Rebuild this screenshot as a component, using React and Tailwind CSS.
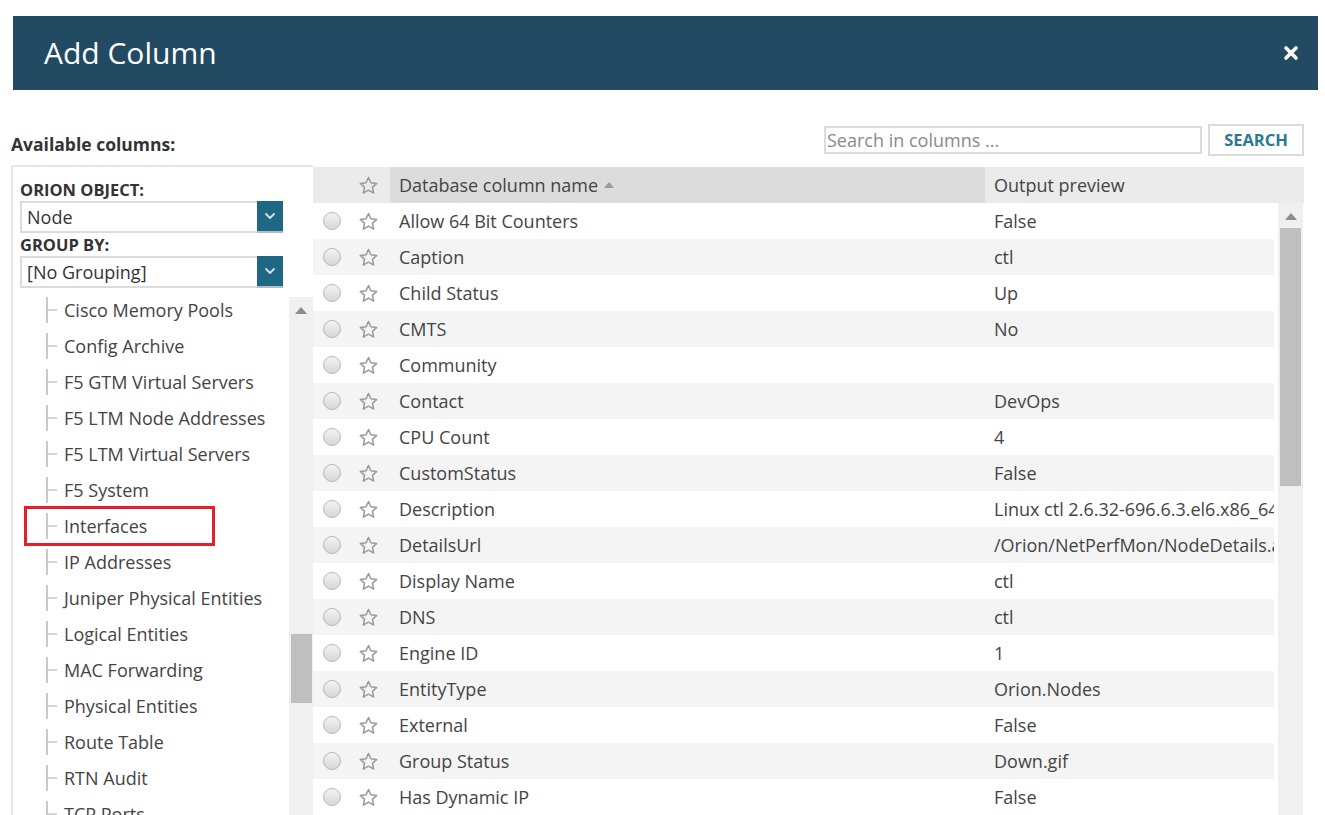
import React from "react";

const treeItems = [
  "Cisco Memory Pools",
  "Config Archive",
  "F5 GTM Virtual Servers",
  "F5 LTM Node Addresses",
  "F5 LTM Virtual Servers",
  "F5 System",
  "Interfaces",
  "IP Addresses",
  "Juniper Physical Entities",
  "Logical Entities",
  "MAC Forwarding",
  "Physical Entities",
  "Route Table",
  "RTN Audit",
  "TCP Ports",
];

const rows = [
  ["Allow 64 Bit Counters", "False"],
  ["Caption", "ctl"],
  ["Child Status", "Up"],
  ["CMTS", "No"],
  ["Community", ""],
  ["Contact", "DevOps"],
  ["CPU Count", "4"],
  ["CustomStatus", "False"],
  ["Description", "Linux ctl 2.6.32-696.6.3.el6.x86_64"],
  ["DetailsUrl", "/Orion/NetPerfMon/NodeDetails.aspx?NetObject=N:1"],
  ["Display Name", "ctl"],
  ["DNS", "ctl"],
  ["Engine ID", "1"],
  ["EntityType", "Orion.Nodes"],
  ["External", "False"],
  ["Group Status", "Down.gif"],
  ["Has Dynamic IP", "False"],
];

const Star = () => (
  <svg width="21" height="21" viewBox="0 0 24 24" fill="none" stroke="#999" strokeWidth="1.7" strokeLinejoin="round">
    <path d="M12 2.8l2.8 6.1 6.6.7-4.9 4.5 1.4 6.6L12 17.4l-5.9 3.3 1.4-6.6-4.9-4.5 6.6-.7z" />
  </svg>
);

const Radio = () => (
  <span className="block w-[18px] h-[18px] rounded-full border border-[#b8b8b8] bg-gradient-to-b from-[#f4f4f4] to-[#d6d6d6]" />
);

const Chevron = () => (
  <svg width="12" height="8" viewBox="0 0 12 8" fill="none" stroke="#cfe3ea" strokeWidth="1.8" strokeLinecap="round" strokeLinejoin="round">
    <path d="M2 2l4 4 4-4" />
  </svg>
);

const Select = ({ value }) => (
  <div className="flex h-[32px] w-[263px]">
    <div className="flex-1 flex items-center border-2 border-[#dcdcdc] border-r-0 bg-white pl-[5px] text-[18px] text-[#333]">
      {value}
    </div>
    <div className="w-[26px] flex items-center justify-center bg-[#1f6884] border-b-2 border-[#b3bac8]">
      <Chevron />
    </div>
  </div>
);

const Connector = () => (
  <svg width="12" height="26" viewBox="0 0 12 26" className="shrink-0">
    <line x1="1" y1="0" x2="1" y2="26" stroke="#c8c8c8" strokeWidth="2" />
    <line x1="1" y1="13" x2="11" y2="13" stroke="#c8c8c8" strokeWidth="1.5" />
  </svg>
);

const ScrollUp = () => (
  <svg width="12" height="7" viewBox="0 0 12 7">
    <path d="M6 0L12 7H0z" fill="#8c8c8c" />
  </svg>
);

export default function App() {
  return (
    <div className="w-[1325px] h-[815px] overflow-hidden bg-white font-['Open_Sans',sans-serif] text-[#444]">
      <div className="pt-4 pl-[13px] pr-[7px]">
        <div className="h-[74px] bg-[#224a63] flex items-center justify-between pl-[31px] pr-[19px]">
          <h1 className="text-[30px] text-white leading-none">Add Column</h1>
          <svg width="16" height="16" viewBox="0 0 16 16" stroke="white" strokeWidth="3.6" strokeLinecap="round">
            <path d="M3 3l10 10M13 3L3 13" />
          </svg>
        </div>
      </div>

      <div className="flex items-end justify-between pl-[11px] pr-[21px] mt-[34px]">
        <div className="text-[17.5px] font-bold text-[#333] leading-[24px]">Available columns:</div>
        <div className="flex items-center gap-[6px]">
          <div className="w-[378px] h-[28px] border-2 border-[#dcdcdc] flex items-center text-[18px] text-[#8a8a8a] pl-[1px]">
            Search in columns ...
          </div>
          <button className="w-[96px] h-[32px] border-2 border-[#dcdcdc] bg-white text-[16.5px] font-bold text-[#2b7892]">
            SEARCH
          </button>
        </div>
      </div>

      <div className="flex ml-[11px] w-[1293px] mt-[9px]">
        <div className="w-[302px] shrink-0 border-l-2 border-t-2 border-[#e6e6e6] flex flex-col h-[660px]">
          <div className="pl-[7px] pt-[12px]">
            <div className="text-[16.5px] font-bold text-[#333] leading-[22px]">ORION OBJECT:</div>
            <Select value="Node" />
            <div className="text-[16.5px] font-bold text-[#333] leading-[22px] mt-[1px]">GROUP BY:</div>
            <Select value="[No Grouping]" />
          </div>
          <div className="flex flex-1 mt-[4px]">
            <div className="flex-1 pl-[33px]">
              {treeItems.map((t) => (
                <div key={t} className="h-[36px] flex items-center">
                  <div
                    className={
                      t === "Interfaces"
                        ? "flex items-center gap-[6px] h-[40px] w-[191px] border-[3px] border-[#e51f2a] -ml-[22px] pl-[19px]"
                        : "flex items-center gap-[6px]"
                    }
                  >
                    <Connector />
                    <span className="text-[18px] text-[#444] whitespace-nowrap">{t}</span>
                  </div>
                </div>
              ))}
            </div>
            <div className="w-[24px] mt-[5px] bg-[#f0f0f0] flex flex-col items-center">
              <div className="h-[26px] flex items-center justify-center">
                <ScrollUp />
              </div>
              <div className="w-[21px] h-[69px] bg-[#bfbfbf] mt-[311px]" />
            </div>
          </div>
        </div>

        <div className="flex-1 flex flex-col pt-[2px]">
          <div className="h-[36px] bg-[#ebebec] flex items-center text-[18px] text-[#444]">
            <div className="w-[37px]" />
            <div className="w-[36px] flex justify-center">
              <Star />
            </div>
            <div className="w-[4px]" />
            <div className="w-[595px] h-full bg-[#dcdcdc] flex items-center pl-[9px] gap-[6px]">
              Database column name
              <svg width="10" height="6" viewBox="0 0 10 6">
                <path d="M5 0L10 6H0z" fill="#9a9a9a" />
              </svg>
            </div>
            <div className="flex-1 pl-[9px]">Output preview</div>
          </div>
          <div className="flex">
            <div className="w-[961px]">
              {rows.map(([name, val], i) => (
                <div
                  key={name}
                  className={`h-[36px] flex items-center text-[18px] text-[#444] ${i % 2 ? "bg-[#f4f4f4]" : "bg-white"}`}
                >
                  <div className="w-[37px] flex justify-center">
                    <Radio />
                  </div>
                  <div className="w-[36px] flex justify-center">
                    <Star />
                  </div>
                  <div className="w-[599px] pl-[13px] whitespace-nowrap">{name}</div>
                  <div className="flex-1 pl-[9px] whitespace-nowrap overflow-hidden">{val}</div>
                </div>
              ))}
            </div>
            <div className="w-[4px]" />
            <div className="w-[25px] bg-[#f0f0f0] flex flex-col items-center h-[612px]">
              <div className="h-[25px] flex items-center justify-center pt-[2px]">
                <ScrollUp />
              </div>
              <div className="w-[21px] h-[258px] bg-[#bfbfbf]" />
            </div>
          </div>
        </div>
      </div>
    </div>
  );
}
